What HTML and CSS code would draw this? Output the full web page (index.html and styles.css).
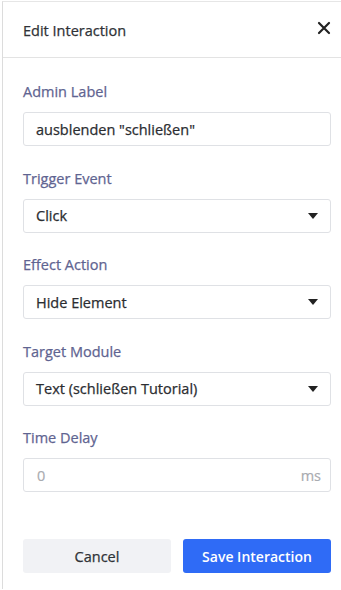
FILE: index.html
```html
<!DOCTYPE html>
<html>
<head>
<meta charset="utf-8">
<link rel="stylesheet" href="styles.css">
</head>
<body>
<div class="panel">
  <div class="header">
    <span class="title">Edit Interaction</span>
    <span class="close">
      <svg width="14" height="14" viewBox="0 0 14 14"><path d="M2 2 L12 12 M12 2 L2 12" stroke="#222" stroke-width="2.2" stroke-linecap="round"/></svg>
    </span>
  </div>
  <div class="content">
    <div class="field">
      <div class="label">Admin Label</div>
      <div class="box"><span class="value">ausblenden "schließen"</span></div>
    </div>
    <div class="field">
      <div class="label">Trigger Event</div>
      <div class="box select"><span class="value">Click</span><span class="caret"></span></div>
    </div>
    <div class="field">
      <div class="label">Effect Action</div>
      <div class="box select"><span class="value">Hide Element</span><span class="caret"></span></div>
    </div>
    <div class="field">
      <div class="label">Target Module</div>
      <div class="box select"><span class="value">Text (schließen Tutorial)</span><span class="caret"></span></div>
    </div>
    <div class="field">
      <div class="label">Time Delay</div>
      <div class="box"><span class="value muted">0</span><span class="unit">ms</span></div>
    </div>
    <div class="actions">
      <button class="btn cancel">Cancel</button>
      <button class="btn save">Save Interaction</button>
    </div>
  </div>
</div>
</body>
</html>
```
FILE: styles.css
```css
html, body {
  margin: 0;
  padding: 0;
  background: #ffffff;
}
body {
  padding: 1px 0 0 2px;
  font-family: "Open Sans", "Noto Sans", sans-serif;
  height: 589px;
  box-sizing: border-box;
}
.panel {
  border-left: 1px solid #dcdcdc;
  border-top: 1px solid #e6e6e6;
  height: 100%;
  box-sizing: border-box;
}
.header {
  height: 56px;
  border-bottom: 1px solid #e3e3e3;
  display: flex;
  align-items: center;
  justify-content: space-between;
  padding: 0 10px 0 20px;
  box-sizing: border-box;
}
.title {
  font-size: 14.5px;
  -webkit-text-stroke: 0.25px #2f3237;
  color: #2f3237;
  line-height: 20px;
  margin-top: 2px;
}
.close {
  display: flex;
  width: 14px;
  height: 14px;
  margin-top: -3px;
}
.content {
  padding: 24px 10px 0 20px;
}
.field {
  margin-bottom: 22.5px;
}
.label {
  font-size: 14.5px;
  -webkit-text-stroke: 0.25px #5f6491;
  line-height: 20px;
  color: #5f6491;
  margin-bottom: 10px;
}
.box {
  height: 34px;
  border: 1px solid #dfe1e5;
  border-radius: 3px;
  box-sizing: border-box;
  display: flex;
  align-items: center;
  justify-content: space-between;
  padding: 0 9px 0 12px;
}
.value {
  font-size: 14.5px;
  -webkit-text-stroke: 0.25px #2b2d31;
  color: #2b2d31;
}
.value.muted {
  color: #a9abb0;
  -webkit-text-stroke: 0.2px #a9abb0;
  padding-left: 1px;
}
.unit {
  font-size: 14.5px;
  -webkit-text-stroke: 0.2px #a9abb0;
  color: #a9abb0;
}
.caret {
  width: 0;
  height: 0;
  border-left: 5px solid transparent;
  border-right: 5px solid transparent;
  border-top: 6px solid #222;
  margin-right: 3px;
}
.actions {
  display: flex;
  gap: 12px;
  margin-top: 47px;
}
.btn {
  flex: 1;
  height: 34px;
  border: none;
  border-radius: 3px;
  font-family: "Open Sans", "Noto Sans", sans-serif;
  font-size: 14.5px;
}
.cancel {
  background: #f1f2f5;
  color: #2f3237;
  -webkit-text-stroke: 0.25px #2f3237;
}
.save {
  background: #2f6bf6;
  color: #ffffff;
  font-size: 14px;
  font-weight: 600;
}
```
